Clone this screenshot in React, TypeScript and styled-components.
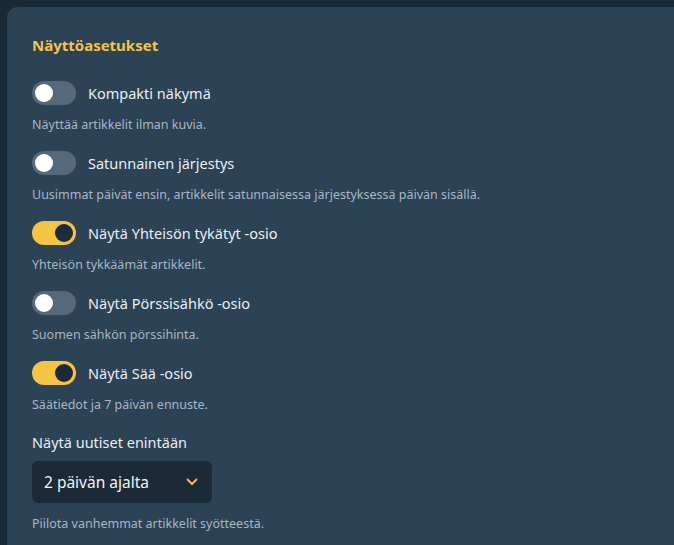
import React, {useState} from 'react'
import styled, {createGlobalStyle} from 'styled-components'

const GlobalStyle = createGlobalStyle`
    html, body {
        margin: 0;
        padding: 0;
        background: #1b2937;
        font-family: "Noto Sans", "Open Sans", sans-serif;
    }
`

const Page = styled.div`
    padding: 7px 0 0 7px;
    height: 100vh;
    box-sizing: border-box;
    overflow: hidden;
    display: flex;
    flex-direction: column;
`

const Card = styled.section`
    flex: 1;
    background: #2c4255;
    border-radius: 10px 0 0 0;
    padding: 28px 25px 0;
    box-sizing: border-box;
`

const Title = styled.h2`
    margin: 0 0 26px;
    font-size: 15px;
    line-height: 20px;
    font-weight: 700;
    color: #f6c343;
`

const Setting = styled.div`
    margin-bottom: 17px;
`

const ToggleRow = styled.label`
    display: flex;
    align-items: center;
    gap: 12px;
    height: 24px;
    cursor: pointer;
`

const Track = styled.span<{$on: boolean}>`
    position: relative;
    width: 44px;
    height: 24px;
    border-radius: 12px;
    background: ${p => p.$on ? '#f6c343' : '#56697b'};
    flex-shrink: 0;
`

const Knob = styled.span<{$on: boolean}>`
    position: absolute;
    top: 3px;
    left: ${p => p.$on ? '23px' : '3px'};
    width: 18px;
    height: 18px;
    border-radius: 50%;
    background: ${p => p.$on ? '#1c2b39' : '#ffffff'};
`

const Label = styled.span`
    font-size: 14.5px;
    line-height: 20px;
    color: #e9eff4;
`

const Desc = styled.p`
    margin: 11px 0 0;
    font-size: 12.5px;
    line-height: 18px;
    color: #a7b6c4;
`

const FieldLabel = styled.div`
    margin-top: 18px;
    font-size: 14.5px;
    line-height: 20px;
    color: #e9eff4;
`

const Select = styled.button`
    margin-top: 9px;
    width: 180px;
    height: 42px;
    border: none;
    border-radius: 6px;
    background: #1c2a38;
    color: #f2f5f8;
    font-family: inherit;
    font-size: 15.5px;
    display: flex;
    align-items: center;
    justify-content: space-between;
    padding: 0 14px 0 12px;
    cursor: pointer;
`

const SelectDesc = styled(Desc)`
    margin-top: 12px;
`

interface ISetting {
    label: string;
    desc: string;
    on: boolean;
}

const initial: ISetting[] = [
    {label: 'Kompakti näkymä', desc: 'Näyttää artikkelit ilman kuvia.', on: false},
    {label: 'Satunnainen järjestys', desc: 'Uusimmat päivät ensin, artikkelit satunnaisessa järjestyksessä päivän sisällä.', on: false},
    {label: 'Näytä Yhteisön tykätyt -osio', desc: 'Yhteisön tykkäämät artikkelit.', on: true},
    {label: 'Näytä Pörssisähkö -osio', desc: 'Suomen sähkön pörssihinta.', on: false},
    {label: 'Näytä Sää -osio', desc: 'Säätiedot ja 7 päivän ennuste.', on: true},
]

const App = () => {
    const [settings, setSettings] = useState(initial)

    const toggle = (i: number) =>
        setSettings(s => s.map((x, j) => j === i ? {...x, on: !x.on} : x))

    return (
        <Page>
            <GlobalStyle/>
            <Card>
                <Title>Näyttöasetukset</Title>
                {settings.map((s, i) => (
                    <Setting key={s.label}>
                        <ToggleRow onClick={() => toggle(i)}>
                            <Track $on={s.on}><Knob $on={s.on}/></Track>
                            <Label>{s.label}</Label>
                        </ToggleRow>
                        <Desc>{s.desc}</Desc>
                    </Setting>
                ))}
                <FieldLabel>Näytä uutiset enintään</FieldLabel>
                <Select>
                    <span>2 päivän ajalta</span>
                    <svg width="12" height="8" viewBox="0 0 12 8">
                        <polyline points="1.5,1.5 6,6 10.5,1.5" fill="none" stroke="#f6c343" strokeWidth="1.8" strokeLinecap="round" strokeLinejoin="round"/>
                    </svg>
                </Select>
                <SelectDesc>Piilota vanhemmat artikkelit syötteestä.</SelectDesc>
            </Card>
        </Page>
    )
}

export default App
